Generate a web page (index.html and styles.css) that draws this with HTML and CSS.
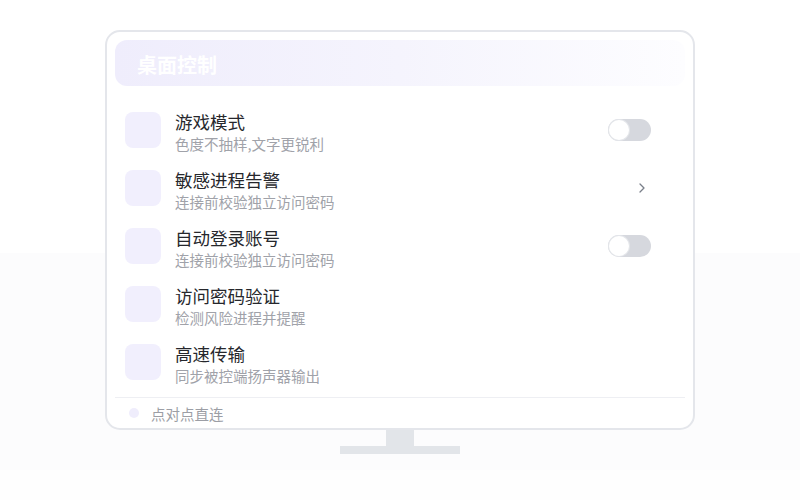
FILE: index.html
```html
<!DOCTYPE html>
<html lang="zh-CN">
<head>
<meta charset="utf-8">
<title>桌面控制</title>
<link rel="stylesheet" href="styles.css">
</head>
<body>
<div class="stage">
  <div class="monitor">
    <div class="header">
      <span class="header-title">桌面控制</span>
    </div>
    <ul class="list">
      <li class="row">
        <span class="icon"></span>
        <div class="text">
          <div class="title">游戏模式</div>
          <div class="sub">色度不抽样,文字更锐利</div>
        </div>
        <span class="action"><span class="toggle"><span class="knob"></span></span></span>
      </li>
      <li class="row">
        <span class="icon"></span>
        <div class="text">
          <div class="title">敏感进程告警</div>
          <div class="sub">连接前校验独立访问密码</div>
        </div>
        <span class="action"><svg class="chev" width="6" height="10" viewBox="0 0 6 10"><path d="M1 1 L5 5 L1 9" fill="none" stroke="#7a7f8a" stroke-width="1.3" stroke-linecap="round" stroke-linejoin="round"/></svg></span>
      </li>
      <li class="row">
        <span class="icon"></span>
        <div class="text">
          <div class="title">自动登录账号</div>
          <div class="sub">连接前校验独立访问密码</div>
        </div>
        <span class="action"><span class="toggle"><span class="knob"></span></span></span>
      </li>
      <li class="row">
        <span class="icon"></span>
        <div class="text">
          <div class="title">访问密码验证</div>
          <div class="sub">检测风险进程并提醒</div>
        </div>
        <span class="action"></span>
      </li>
      <li class="row">
        <span class="icon"></span>
        <div class="text">
          <div class="title">高速传输</div>
          <div class="sub">同步被控端扬声器输出</div>
        </div>
        <span class="action"></span>
      </li>
    </ul>
    <div class="footer">
      <span class="dot"></span>
      <span class="footer-text">点对点直连</span>
    </div>
  </div>
  <div class="neck"></div>
  <div class="base"></div>
</div>
</body>
</html>
```

FILE: styles.css
```css
* { box-sizing: border-box; }
html, body { margin: 0; padding: 0; height: 100%; }
body {
  font-family: "Noto Sans CJK SC", "Noto Sans", sans-serif;
  background: linear-gradient(to bottom, #ffffff 0, #ffffff 253px, #fcfcfd 253px, #fcfcfd 470px, #fefefe 470px);
  min-height: 500px;
}
.stage {
  padding-top: 30px;
  display: flex;
  flex-direction: column;
  align-items: center;
}
.monitor {
  width: 590px;
  height: 400px;
  border: 2px solid #e4e6eb;
  border-radius: 15px;
  background: #ffffff;
  padding: 8px 8px 0;
  display: flex;
  flex-direction: column;
}
.header {
  height: 46px;
  border-radius: 12px;
  background: linear-gradient(to right, #efedfc 0%, #f5f4fd 50%, #fdfdff 100%);
  display: flex;
  align-items: center;
  padding-left: 22px;
  padding-top: 3px;
}
.header-title {
  color: #ffffff;
  font-size: 20px;
  font-weight: 700;
  line-height: 1;
}
.list {
  list-style: none;
  margin: 15px 0 0;
  padding: 0;
}
.row {
  height: 58px;
  display: flex;
  align-items: center;
  padding-left: 10px;
}
.icon {
  width: 36px;
  height: 36px;
  border-radius: 8px;
  background: #f1effd;
  flex: none;
}
.text {
  margin-left: 14px;
  flex: 1;
  padding-top: 6px;
}
.title {
  font-size: 17.5px;
  line-height: 22px;
  color: #26272c;
}
.sub {
  font-size: 14.5px;
  line-height: 22px;
  color: #a0a2a9;
}
.action {
  width: 43px;
  margin-right: 34px;
  display: flex;
  justify-content: flex-end;
  align-items: center;
}
.chev { margin-right: 6px; }
.toggle {
  width: 43px;
  height: 22px;
  border-radius: 11px;
  background: #d6d8de;
  padding: 1px;
  display: flex;
}
.knob {
  width: 20px;
  height: 20px;
  border-radius: 50%;
  background: #ffffff;
  box-shadow: 0 0 0 1px #e4e6ea;
}
.footer {
  margin-top: 6px;
  border-top: 1px solid #eeeff3;
  height: 31px;
  display: flex;
  align-items: center;
  padding-left: 14px;
}
.dot {
  width: 10px;
  height: 10px;
  border-radius: 50%;
  background: #efedfc;
}
.footer-text {
  margin-left: 12px;
  font-size: 14.5px;
  color: #9c9ea5;
}
.neck {
  width: 28px;
  height: 16px;
  background: #e2e5e9;
}
.base {
  width: 120px;
  height: 8px;
  background: #e2e5e9;
}
```
